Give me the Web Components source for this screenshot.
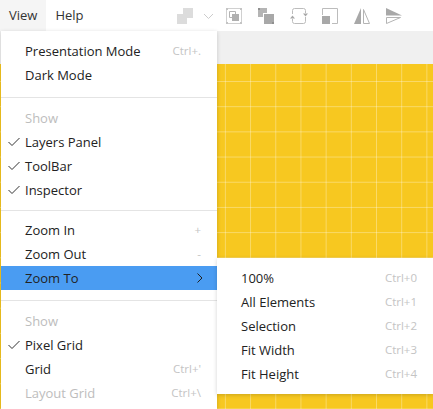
<!DOCTYPE html>
<html>
<head>
<meta charset="utf-8">
<title>View menu</title>
<style>
  html, body { margin: 0; height: 100%; overflow: hidden; }
  body { font: 13px/24px "Open Sans", "Noto Sans", sans-serif; color: #222; }
</style>
</head>
<body>
<app-shell>
  <app-menubar slot="bar">
    <tool-icon name="union" style="margin-left:84px"></tool-icon>
    <tool-icon name="chevron" style="margin-left:10px"></tool-icon>
    <tool-icon name="front" style="margin-left:12px"></tool-icon>
    <tool-icon name="back"></tool-icon>
    <tool-icon name="rotate"></tool-icon>
    <tool-icon name="scale"></tool-icon>
    <tool-icon name="fliph"></tool-icon>
    <tool-icon name="flipv"></tool-icon>
  </app-menubar>
  <pop-menu slot="overlay" style="left:1px;top:31px">
    <menu-row label="Presentation Mode" keys="Ctrl+."></menu-row>
    <menu-row label="Dark Mode"></menu-row>
    <menu-sep></menu-sep>
    <menu-row label="Show" muted></menu-row>
    <menu-row label="Layers Panel" checked></menu-row>
    <menu-row label="ToolBar" checked></menu-row>
    <menu-row label="Inspector" checked></menu-row>
    <menu-sep tight></menu-sep>
    <menu-row label="Zoom In" keys="+"></menu-row>
    <menu-row label="Zoom Out" keys="-"></menu-row>
    <menu-row label="Zoom To" active arrow></menu-row>
    <menu-sep></menu-sep>
    <menu-row label="Show" muted></menu-row>
    <menu-row label="Pixel Grid" checked></menu-row>
    <menu-row label="Grid" keys="Ctrl+'"></menu-row>
    <menu-row label="Layout Grid" keys="Ctrl+\" muted></menu-row>
  </pop-menu>
  <pop-menu slot="overlay" style="left:217px;top:258px">
    <menu-row label="100%" keys="Ctrl+0"></menu-row>
    <menu-row label="All Elements" keys="Ctrl+1"></menu-row>
    <menu-row label="Selection" keys="Ctrl+2"></menu-row>
    <menu-row label="Fit Width" keys="Ctrl+3"></menu-row>
    <menu-row label="Fit Height" keys="Ctrl+4"></menu-row>
  </pop-menu>
</app-shell>

<script>
// page frame: menu bar, grey strip, yellow canvas, popups on top
class AppShell extends HTMLElement {
  constructor() {
    super();
    this.attachShadow({ mode: 'open' });
    this.shadowRoot.innerHTML = `
      <style>
        :host { display: grid; grid-template-rows: 31px 33px 1fr; height: 409px; position: relative; overflow: hidden; background: #fff; }
        .strip { background: #f0f0f0; }
        .canvas {
          background-color: #f7c820;
          background-image:
            linear-gradient(to right, rgba(255,255,255,.32) 1px, transparent 1px),
            linear-gradient(to bottom, rgba(255,255,255,.32) 1px, transparent 1px);
          background-size: 25.2px 25.2px;
          background-position: -1.8px 17px;
        }
      </style>
      <slot name="bar"></slot>
      <div class="strip"></div>
      <div class="canvas"></div>
      <slot name="overlay"></slot>
    `;
  }
}

class AppMenubar extends HTMLElement {
  constructor() {
    super();
    this.attachShadow({ mode: 'open' });
    this.shadowRoot.innerHTML = `
      <style>
        :host { display: flex; align-items: center; height: 31px; color: #333; }
        .item { padding: 0 9px; line-height: 31px; }
        .item.open { background: #f5f5f5; }
        .tools { display: flex; align-items: center; }
      </style>
      <div class="item open">View</div>
      <div class="item">Help</div>
      <div class="tools"><slot></slot></div>
    `;
  }
}

const toolIcons = {
  union: `<path d="M6 6V0h10v10h-6v6H0V6z" fill="#dcdcdc"/>`,
  chevron: `<path d="M1 6l4.500 4.500L10 6" fill="none" stroke="#ccc"/>`,
  front: `<path d="M.5.5h15v15H.5z" fill="none" stroke="#d0d0d0"/><path d="M0 0h2v2H0zM14 0h2v2h-2zM0 14h2v2H0zM14 14h2v2h-2z" fill="#c4c4c4"/><path d="M3.500 3.500h6v6h-6z" fill="none" stroke="#b4b4b4"/><path d="M6 6h7v7H6z" fill="#b0b0b0"/>`,
  back: `<path d="M0 0h9v5H5v4H0z" fill="#b4b4b4"/><path d="M6 6h10v10H6z" fill="#a8a8a8"/><path d="M0 0h2v2H0zM14 14h2v2h-2z" fill="#909090"/>`,
  rotate: `<path d="M2.500 6V2.500a2 2 0 0 1 2-2h9a2 2 0 0 1 2 2V5M15.500 9v4.500a2 2 0 0 1-2 2h-9a2 2 0 0 1-2-2V11" fill="none" stroke="#bcbcbc"/><path d="M0 10.500l2.500-3 2.500 3zM13 5.500h5l-2.500 3z" fill="#a8a8a8"/>`,
  scale: `<path d="M.5 7V.5h15v15H10" fill="none" stroke="#bcbcbc"/><path d="M0 8h8v8H0z" fill="#a8a8a8"/>`,
  fliph: `<path d="M7 0v16H0z" fill="#a8a8a8"/><path d="M9.500 1.500v14h6z" fill="none" stroke="#b4b4b4"/>`,
  flipv: `<path d="M0 0l16 7.500H0z" fill="#a8a8a8"/><path d="M.5 9.500h14l-14 6z" fill="none" stroke="#b4b4b4"/>`
};

class ToolIcon extends HTMLElement {
  constructor() {
    super();
    this.attachShadow({ mode: 'open' });
  }

  connectedCallback() {
    const name = this.getAttribute('name');
    const w = name === 'rotate' ? 18 : name === 'chevron' ? 11 : 16;
    const gap = name === 'rotate' ? 14 : 16;
    this.shadowRoot.innerHTML = `
      <style>
        :host { display: block; width: ${w}px; height: 16px; margin-right: ${name === 'union' || name === 'chevron' ? 0 : gap}px; }
        svg { display: block; }
      </style>
      <svg width="${w}" height="16" viewBox="0 0 ${w} 16">${toolIcons[name]}</svg>
    `;
  }
}

class PopMenu extends HTMLElement {
  constructor() {
    super();
    this.attachShadow({ mode: 'open' });
    this.shadowRoot.innerHTML = `
      <style>
        :host { display: block; position: absolute; width: 216px; padding: 8px 0; background: #fff; box-shadow: 0 1px 4px rgba(0,0,0,.18); }
      </style>
      <slot></slot>
    `;
  }
}

class MenuSep extends HTMLElement {
  constructor() {
    super();
    this.attachShadow({ mode: 'open' });
    this.shadowRoot.innerHTML = `
      <style>
        :host { display: block; height: 1px; margin: 10px 0 8px; background: #e4e4e4; }
        :host([tight]) { margin: 8px 0 7px; }
      </style>
    `;
  }
}

class MenuRow extends HTMLElement {
  static observedAttributes = ['label', 'keys'];

  constructor() {
    super();
    this.attachShadow({ mode: 'open' });
    this.shadowRoot.innerHTML = `
      <style>
        :host { display: flex; align-items: center; height: 24px; padding: 0 16px 0 24px; position: relative; color: #222; }
        :host([muted]) { color: #bdbdbd; }
        :host([active]) { background: #4a9cf2; }
        .keys { margin-left: auto; font-size: 11.5px; color: #c4c4c4; }
        .check, .arrow { display: none; position: absolute; }
        :host([checked]) .check { display: block; left: 7px; top: 7px; }
        :host([arrow]) .arrow { display: block; right: 14px; top: 7px; }
      </style>
      <svg class="check" width="12" height="10" viewBox="0 0 12 10"><path d="M.5 5l3.500 3.500L11.500 1" fill="none" stroke="#333"/></svg>
      <span class="label"></span>
      <span class="keys"></span>
      <svg class="arrow" width="6" height="10" viewBox="0 0 6 10"><path d="M.5.5L5 5 .5 9.500" fill="none" stroke="#222"/></svg>
    `;
  }

  attributeChangedCallback(name, oldValue, newValue) {
    if (name === 'label') {
      this.shadowRoot.querySelector('.label').textContent = newValue;
    }
    if (name === 'keys') {
      this.shadowRoot.querySelector('.keys').textContent = newValue;
    }
  }
}

customElements.define('app-shell', AppShell);
customElements.define('app-menubar', AppMenubar);
customElements.define('tool-icon', ToolIcon);
customElements.define('pop-menu', PopMenu);
customElements.define('menu-sep', MenuSep);
customElements.define('menu-row', MenuRow);
</script>
</body>
</html>
